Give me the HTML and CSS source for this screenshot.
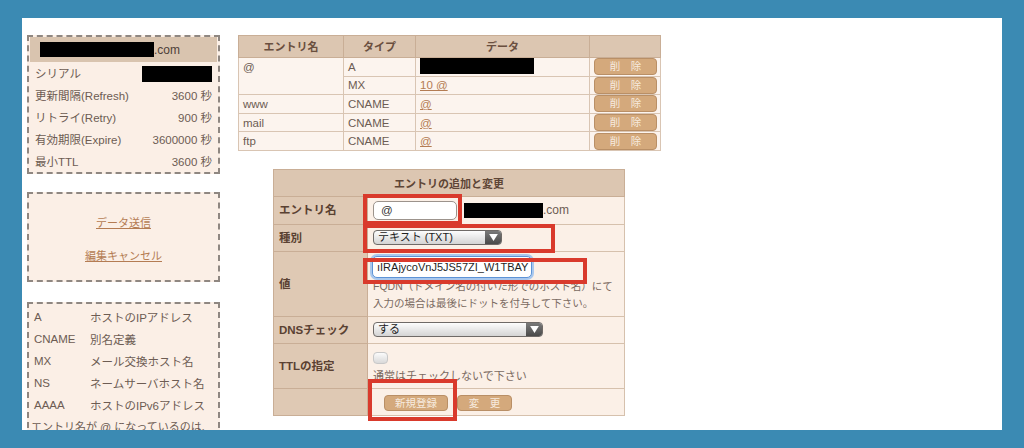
FILE: index.html
```html
<!DOCTYPE html>
<html lang="ja">
<head>
<meta charset="utf-8">
<title>DNS</title>
<link rel="stylesheet" href="styles.css">
</head>
<body>
<div class="frame">
  <aside class="side">
    <div class="box soa">
      <div class="soa-head"><span class="redact r-domain"></span>.com</div>
      <div class="soa-row"><span>シリアル</span><span class="redact r-serial"></span></div>
      <div class="soa-row"><span>更新間隔(Refresh)</span><span>3600 秒</span></div>
      <div class="soa-row"><span>リトライ(Retry)</span><span>900 秒</span></div>
      <div class="soa-row"><span>有効期限(Expire)</span><span>3600000 秒</span></div>
      <div class="soa-row"><span>最小TTL</span><span>3600 秒</span></div>
    </div>
    <div class="box actions">
      <a href="#" class="link">データ送信</a>
      <a href="#" class="link">編集キャンセル</a>
    </div>
    <div class="box legend">
      <div class="lg-row"><span class="lg-k">A</span><span>ホストのIPアドレス</span></div>
      <div class="lg-row"><span class="lg-k">CNAME</span><span>別名定義</span></div>
      <div class="lg-row"><span class="lg-k">MX</span><span>メール交換ホスト名</span></div>
      <div class="lg-row"><span class="lg-k">NS</span><span>ネームサーバホスト名</span></div>
      <div class="lg-row"><span class="lg-k">AAAA</span><span>ホストのIPv6アドレス</span></div>
      <div class="lg-note">エントリ名が @ になっているのは、</div>
    </div>
  </aside>

  <main class="main">
    <table class="records">
      <colgroup><col class="c1"><col class="c2"><col class="c3"><col class="c4"></colgroup>
      <thead>
        <tr><th>エントリ名</th><th>タイプ</th><th>データ</th><th></th></tr>
      </thead>
      <tbody>
        <tr><td rowspan="2" class="top">@</td><td>A</td><td><span class="redact r-ip"></span></td><td class="btn-cell"><span class="del">削　除</span></td></tr>
        <tr><td>MX</td><td><a href="#" class="link">10 @</a></td><td class="btn-cell"><span class="del">削　除</span></td></tr>
        <tr><td>www</td><td>CNAME</td><td><a href="#" class="link">@</a></td><td class="btn-cell"><span class="del">削　除</span></td></tr>
        <tr><td>mail</td><td>CNAME</td><td><a href="#" class="link">@</a></td><td class="btn-cell"><span class="del">削　除</span></td></tr>
        <tr><td>ftp</td><td>CNAME</td><td><a href="#" class="link">@</a></td><td class="btn-cell"><span class="del">削　除</span></td></tr>
      </tbody>
    </table>

    <div class="form-wrap">
      <table class="form">
        <colgroup><col class="fl"><col class="fv"></colgroup>
        <thead><tr><th colspan="2"><div class="hcell">エントリの追加と変更</div></th></tr></thead>
        <tbody>
          <tr><th>エントリ名</th><td><div class="cell c27 row"><span class="input small">@</span><span class="redact r-dom2"></span><span class="dom">.com</span></div></td></tr>
          <tr><th>種別</th><td><div class="cell c26 row"><span class="select s-type"><span class="s-text">テキスト (TXT)</span><span class="s-arrow"><svg width="9" height="7" viewBox="0 0 10 8"><path d="M0 0 H10 L5 8 Z" fill="#fff"/></svg></span></span></div></td></tr>
          <tr><th>値</th><td><div class="cell c64 col val">
            <span class="input wide focus">ıIRAjycoVnJ5JS57ZI_W1TBAY</span>
            <div class="help">FQDN（ドメイン名の付いた形でのホスト名）にて</div>
            <div class="help">入力の場合は最後にドットを付与して下さい。</div>
          </div></td></tr>
          <tr><th>DNSチェック</th><td><div class="cell c26 row"><span class="select s-dns"><span class="s-text">する</span><span class="s-arrow"><svg width="9" height="7" viewBox="0 0 10 8"><path d="M0 0 H10 L5 8 Z" fill="#fff"/></svg></span></span></div></td></tr>
          <tr><th>TTLの指定</th><td><div class="cell c44 col ttl"><span class="check"></span><div class="help">通常はチェックしないで下さい</div></div></td></tr>
          <tr><th class="empty"></th><td><div class="cell c26 row btns"><span class="fbtn b-new">新規登録</span><span class="fbtn b-chg">変　更</span></div></td></tr>
        </tbody>
      </table>
      <span class="mark m1"></span>
      <span class="mark m2"></span>
      <span class="mark m3"></span>
      <span class="mark m4"></span>
    </div>
  </main>
</div>
</body>
</html>
```

FILE: styles.css
```css
html, body {
  margin: 0;
  padding: 0;
}
body {
  background: #3b8ab3;
  width: 1024px;
  height: 448px;
  overflow: hidden;
  font-family: "Liberation Sans", "Noto Sans CJK JP", sans-serif;
  font-size: 11px;
  color: #6d5c53;
}
.frame {
  margin: 18px 22px 0;
  height: 412px;
  background: #fff;
  overflow: hidden;
  box-sizing: border-box;
  padding: 17px 0 0 5px;
  display: flex;
  align-items: flex-start;
  gap: 18px;
}
.side {
  width: 193px;
  display: flex;
  flex-direction: column;
  flex-shrink: 0;
}
.box {
  border: 2px dashed #8f8781;
  background: #fbefe6;
  box-sizing: border-box;
}
.redact {
  display: inline-block;
  background: #000;
  vertical-align: middle;
  flex-shrink: 0;
}
.soa {
  padding: 0 1px 0;
}
.soa-head {
  height: 25px;
  background: #d9c4af;
  display: flex;
  align-items: center;
  padding-left: 10px;
  font-size: 12px;
  color: #4e4039;
}
.r-domain { width: 114px; height: 15px; }
.r-serial { width: 70px; height: 16px; margin-top: 1px; }
.soa-row {
  height: 22px;
  display: flex;
  justify-content: space-between;
  align-items: center;
  padding: 0 5px 0 5px;
  font-size: 11.5px;
  white-space: nowrap;
}
.actions {
  margin-top: 18px;
  height: 90px;
  display: flex;
  flex-direction: column;
  align-items: center;
  padding-top: 20px;
  gap: 17px;
}
.link {
  color: #b47c53;
  text-decoration: underline;
}
.legend {
  margin-top: 20px;
  padding: 2px 0 0 5px;
  font-size: 11.5px;
}
.lg-row {
  height: 22px;
  display: flex;
  align-items: center;
  white-space: nowrap;
}
.lg-k {
  width: 56px;
  flex-shrink: 0;
}
.lg-note {
  height: 20px;
  display: flex;
  align-items: center;
  margin-left: -3px;
  font-size: 11px;
  white-space: nowrap;
}

.main {
  display: flex;
  flex-direction: column;
}
.records {
  width: 422px;
  border-collapse: collapse;
  table-layout: fixed;
  border: 1px solid #c9ae96;
}
.records .c1 { width: 105px; }
.records .c2 { width: 72px; }
.records .c3 { width: 174px; }
.records .c4 { width: 71px; }
.records th {
  height: 21px;
  background: #dcc6b1;
  color: #6a4f3f;
  font-weight: bold;
  font-size: 11px;
  line-height: 14px;
  border: 1px solid #c9ae96;
  padding: 0;
}
.records td {
  height: 17.6px;
  background: #fcf4ee;
  border: 1px solid #d9c5b3;
  padding: 0 4px;
  line-height: 14px;
  font-size: 11.5px;
}
.records td.top { vertical-align: top; padding-top: 2px; }
.records td.btn-cell { padding: 0 4px 0 4px; text-align: center; }
.r-ip { width: 114px; height: 16px; margin-top: -3px; }
.del {
  display: inline-block;
  width: 61px;
  height: 15px;
  line-height: 15px;
  background: #d4a97c;
  border: 1px solid #b98f66;
  border-radius: 4px;
  color: #f7ebdf;
  font-size: 10.5px;
  text-align: center;
  vertical-align: middle;
}

.form-wrap {
  position: relative;
  margin: 18px 0 0 35px;
  width: 352px;
}
.form {
  width: 352px;
  border-collapse: collapse;
  table-layout: fixed;
  border: 1px solid #c9ae96;
}
.form .fl { width: 94px; }
.form thead th {
  background: #dcc6b1;
  color: #5e4536;
  font-weight: bold;
  font-size: 11px;
  border: 1px solid #c9ae96;
  padding: 0;
}
.hcell {
  height: 26px;
  display: flex;
  align-items: center;
  justify-content: center;
}
.form tbody th {
  background: #dfc9b4;
  color: #5a4132;
  font-weight: bold;
  text-align: left;
  padding: 0 0 0 5px;
  border: 1px solid #c9ae96;
  font-size: 11.5px;
  line-height: 14px;
}
.form tbody td {
  background: #fbf0e7;
  border: 1px solid #d6c1ad;
  padding: 0;
  vertical-align: top;
}
.cell {
  box-sizing: border-box;
  padding-left: 5px;
  display: flex;
}
.cell.row { align-items: center; }
.cell.col { flex-direction: column; align-items: flex-start; }
.c27 { height: 27px; }
.c26 { height: 26px; }
.c64 { height: 64px; }
.c44 { height: 44px; }

.input {
  display: inline-block;
  box-sizing: border-box;
  background: #fff;
  border: 1px solid #9c938c;
  border-radius: 5px;
  color: #333;
  font-size: 11.5px;
  padding-left: 7px;
  flex-shrink: 0;
}
.small {
  width: 84px;
  height: 19px;
  line-height: 17px;
  margin-right: 7px;
}
.r-dom2 { width: 79px; height: 15px; }
.dom { color: #6d5c53; font-size: 12px; }
.val { padding-top: 4px; }
.wide {
  width: 160px;
  height: 22px;
  line-height: 20px;
  margin: 0 0 0 -1px;
  padding-left: 4px;
  font-size: 11px;
  color: #1f1f1f;
  white-space: nowrap;
  overflow: hidden;
}
.focus {
  border: 1px solid #5d93d6;
  box-shadow: 0 0 0 2px #a9c8ee;
}
.help {
  height: 17px;
  line-height: 17px;
  color: #7a6a61;
  font-size: 10.5px;
  white-space: nowrap;
}
.select {
  display: inline-flex;
  box-sizing: border-box;
  height: 15px;
  border: 1px solid #6f6a67;
  border-radius: 4px;
  background: linear-gradient(#fdfdfd, #d4d4d4);
  overflow: hidden;
  color: #222;
}
.s-type { width: 129px; }
.s-dns { width: 170px; }
.s-text {
  flex: 1;
  font-size: 11px;
  line-height: 13px;
  padding-left: 4px;
}
.s-arrow {
  width: 16px;
  background: linear-gradient(#7a7a7a, #4a4a4a);
  display: flex;
  align-items: center;
  justify-content: center;
}
.ttl { padding-top: 8px; }
.check {
  display: block;
  width: 13px;
  height: 10px;
  border-radius: 4px;
  background: linear-gradient(#fbfbfb, #d9d9d9);
  border: 1px solid #c8c8c8;
}
.ttl .help { margin-top: 4px; font-size: 11px; }
.btns { padding-left: 16px; align-items: flex-start; padding-top: 2px; }
.fbtn {
  display: inline-block;
  height: 14px;
  line-height: 14px;
  background: #d4a97c;
  border: 1px solid #b98f66;
  border-radius: 4px;
  color: #f7ebdf;
  font-size: 10.5px;
  text-align: center;
}
.b-new { width: 62px; }
.b-chg { width: 53px; margin-left: 9px; }

.mark {
  position: absolute;
  box-sizing: border-box;
  border: 4px solid #d93a2c;
}
.m1 { left: 90px; top: 25px; width: 99px; height: 31px; }
.m2 { left: 90px; top: 55px; width: 192px; height: 29px; }
.m3 { left: 90px; top: 89px; width: 224px; height: 26px; }
.m4 { left: 95px; top: 210px; width: 89px; height: 42px; }
```
